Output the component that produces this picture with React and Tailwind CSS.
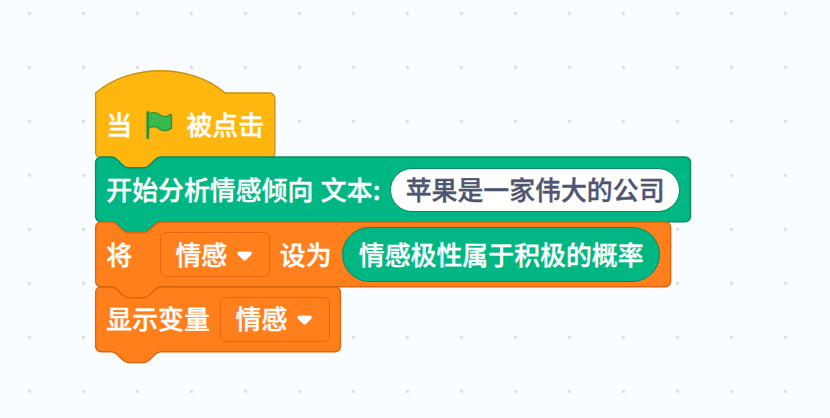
import React from "react";

const NOTCH_TOP =
  "c 2,0 3,1 4,2 l 4,4 c 1,1 2,2 4,2 h 12 c 2,0 3,-1 4,-2 l 4,-4 c 1,-1 2,-2 4,-2";
const NOTCH_BOTTOM =
  "c -2,0 -3,1 -4,2 l -4,4 c -1,1 -2,2 -4,2 h -12 c -2,0 -3,-1 -4,-2 l -4,-4 c -1,-1 -2,-2 -4,-2";

// Outline of a stack block, in workspace units.
function outline(width, hat) {
  const top = hat
    ? "M 0,0 c 25,-22 71,-22 96,0"
    : `M 0,4 a 4,4 0 0,1 4,-4 H 12 ${NOTCH_TOP}`;
  return `${top} H ${width - 4} a 4,4 0 0,1 4,4 v 40 a 4,4 0 0,1 -4,4 H 48 ${NOTCH_BOTTOM} H 4 a 4,4 0 0,1 -4,-4 z`;
}

function Block({ width, hat, tone, children }) {
  return (
    <div className="relative h-[64.8px]">
      <svg
        className={`absolute left-0 top-0 h-[64.8px] w-[64.8px] overflow-visible ${tone}`}
        viewBox="0 0 48 48"
      >
        <path d={outline(width, hat)} transform="translate(0.45 0)" strokeWidth="1" />
      </svg>
      <div className="relative flex h-full items-center whitespace-nowrap">{children}</div>
    </div>
  );
}

function Label({ className = "", children }) {
  return (
    <span className={`relative -top-px leading-none [-webkit-text-stroke:0.35px_currentColor] ${className}`}>
      {children}
    </span>
  );
}

function Dropdown({ className, children }) {
  return (
    <div
      className={`flex h-[44.5px] w-[110px] items-center rounded-[6px] border-[1.35px] border-[#e5680f] pl-[14.5px] ${className}`}
    >
      <Label>{children}</Label>
      <svg className="relative top-px ml-[9px] h-[11.9px] w-[17.2px]" viewBox="0 0 12.71 8.79">
        <path
          fill="#fff"
          d="M6.36,7.79a1.43,1.43,0,0,1-1-.42L1.42,3.45a1.44,1.44,0,0,1,0-2c.56-.56,9.31-.56,9.87,0a1.44,1.44,0,0,1,0,2L7.37,7.37A1.43,1.43,0,0,1,6.36,7.79Z"
        />
      </svg>
    </div>
  );
}

function GreenFlag() {
  return (
    <svg className="ml-[11px] h-[32.4px] w-[32.4px]" viewBox="0 0 24 24">
      <path
        fill="#2f9238"
        d="M20.8,3.7c-0.4-0.2-0.9-0.1-1.2,0.2c-2,1.6-4.8,1.6-6.8,0c-2.3-1.9-5.6-2.3-8.3-1V2.5c0-0.6-0.5-1-1-1s-1,0.4-1,1v18.8c0,0.5,0.5,1,1,1h0.1c0.5,0,1-0.5,1-1v-6.4c1-0.7,2.1-1.2,3.4-1.3c1.2,0,2.4,0.4,3.4,1.2c2.9,2.3,7,2.3,9.8,0c0.3-0.2,0.4-0.5,0.4-0.9V4.7C21.6,4.2,21.3,3.8,20.8,3.7z"
      />
      <path
        fill="#39ba50"
        d="M20.5,13.9C18,16,14.4,16,11.9,14c-1.1-0.9-2.5-1.4-4-1.4c-1.2,0.1-2.3,0.5-3.4,1.1V4c2.5-1.4,5.5-1.1,7.7,0.6c2.4,1.9,5.7,1.9,8.1,0h0.2l0.1,0.1L20.5,13.9z"
      />
    </svg>
  );
}

function Grid() {
  return (
    <svg className="absolute inset-0 h-full w-full">
      <defs>
        <pattern id="dots" x="2.5" y="-13.5" width="54" height="54" patternUnits="userSpaceOnUse">
          <circle cx="27" cy="27" r="1.45" fill="#cfd1d4" />
        </pattern>
      </defs>
      <rect width="100%" height="100%" fill="url(#dots)" />
    </svg>
  );
}

export default function App() {
  return (
    <main className="relative h-[418px] w-[830px] overflow-hidden bg-[#f9fdff] font-['Noto_Sans_CJK_SC',sans-serif] text-[25.9px] font-medium text-white">
      <Grid />
      <div className="relative flex flex-col pl-[95.3px] pt-[92.5px]">
        <Block width={132.8} hat tone="fill-[#ffb710] stroke-[#c98f0e]">
          <Label className="ml-[11px]">当</Label>
          <GreenFlag />
          <Label className="ml-[10.8px]">被点击</Label>
        </Block>
        <Block width={440.7} tone="fill-[#00b682] stroke-[#048a62]">
          <Label className="ml-[11px] [word-spacing:1.6px]">开始分析情感倾向 文本:</Label>
          <div className="ml-[10px] flex h-[44.2px] w-[289.5px] items-center justify-center rounded-full border-[1.35px] border-[#048a62] bg-white text-[#4e5570]">
            <Label>苹果是一家伟大的公司</Label>
          </div>
        </Block>
        <Block width={426} tone="fill-[#ff7f1d] stroke-[#dc650d]">
          <Label className="ml-[11px]">将</Label>
          <Dropdown className="ml-[27.8px]">情感</Dropdown>
          <Label className="ml-[9.8px]">设为</Label>
          <div className="ml-[10.4px] flex h-[55px] w-[318.5px] items-center justify-center rounded-full border-[1.35px] border-[#048a62] bg-[#00b682]">
            <Label>情感极性属于积极的概率</Label>
          </div>
        </Block>
        <Block width={181.4} tone="fill-[#ff7f1d] stroke-[#dc650d]">
          <Label className="ml-[11px]">显示变量</Label>
          <Dropdown className="ml-[10.2px]">情感</Dropdown>
        </Block>
      </div>
    </main>
  );
}
